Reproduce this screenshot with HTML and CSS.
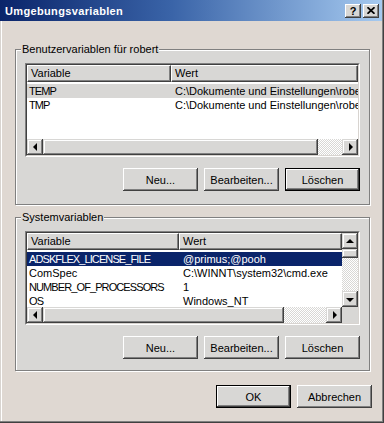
FILE: index.html
```html
<!DOCTYPE html>
<html lang="de">
<head>
<meta charset="utf-8">
<title>Umgebungsvariablen</title>
<link rel="stylesheet" href="styles.css">
</head>
<body>
<div class="window">
  <div class="titlebar">
    <span class="title">Umgebungsvariablen</span>
    <div class="tbtns">
      <span class="tbtn help">?</span>
      <span class="tbtn"><svg width="8" height="7" viewBox="0 0 8 7"><path d="M0.5 0.2L7.5 6.8M7.5 0.2L0.5 6.8" stroke="#000" stroke-width="1.7" fill="none"/></svg></span>
    </div>
  </div>
  <div class="content">
    <fieldset class="group g1">
      <legend>Benutzervariablen für robert</legend>
      <div class="listview lv1">
        <div class="lv-inner">
          <div class="lv-main">
            <div class="lv-header">
              <div class="hcell c1">Variable</div>
              <div class="hcell last">Wert</div>
            </div>
            <div class="lv-rows">
              <div class="row sel-inactive"><span class="c1 caps">TEMP</span><span class="c2">C:\Dokumente und Einstellungen\robe</span></div>
              <div class="row"><span class="c1 caps">TMP</span><span class="c2">C:\Dokumente und Einstellungen\robe</span></div>
            </div>
          </div>
          <div class="hscroll">
            <span class="arrow"><i class="tri-l"></i></span>
            <span class="thumb t1"></span>
            <span class="track"></span>
            <span class="arrow"><i class="tri-r"></i></span>
          </div>
        </div>
      </div>
      <div class="btnrow">
        <button class="btn">Neu...</button>
        <button class="btn">Bearbeiten...</button>
        <button class="btn default">Löschen</button>
      </div>
    </fieldset>

    <fieldset class="group g2">
      <legend>Systemvariablen</legend>
      <div class="listview lv2">
        <div class="lv-inner">
          <div class="lv-main">
            <div class="lv-header">
              <div class="hcell c1">Variable</div>
              <div class="hcell last">Wert</div>
            </div>
            <div class="lv-rows">
              <div class="row sel-active"><span class="c1 caps">ADSKFLEX_LICENSE_FILE</span><span class="c2">@primus;@pooh</span></div>
              <div class="row"><span class="c1">ComSpec</span><span class="c2">C:\WINNT\system32\cmd.exe</span></div>
              <div class="row"><span class="c1 caps">NUMBER_OF_PROCESSORS</span><span class="c2">1</span></div>
              <div class="row"><span class="c1 caps">OS</span><span class="c2">Windows_NT</span></div>
            </div>
          </div>
          <div class="vscroll">
            <span class="arrow"><i class="tri-u"></i></span>
            <span class="thumb t3"></span>
            <span class="track"></span>
            <span class="arrow"><i class="tri-d"></i></span>
          </div>
          <div class="hscroll">
            <span class="arrow"><i class="tri-l"></i></span>
            <span class="thumb t2"></span>
            <span class="track"></span>
            <span class="arrow"><i class="tri-r"></i></span>
          </div>
          <div class="corner"></div>
        </div>
      </div>
      <div class="btnrow">
        <button class="btn">Neu...</button>
        <button class="btn">Bearbeiten...</button>
        <button class="btn">Löschen</button>
      </div>
    </fieldset>

    <div class="footer">
      <button class="btn default">OK</button>
      <button class="btn">Abbrechen</button>
    </div>
  </div>
</div>
</body>
</html>
```
FILE: styles.css
```css
* { box-sizing: border-box; }
html, body { margin: 0; padding: 0; }
body {
  font-family: "Liberation Sans", Arial, sans-serif;
  font-size: 11px;
  color: #000;
  background: #dfd8d2;
}
.window {
  width: 384px;
  height: 423px;
  background: #dfd8d2;
  border-right: 1px solid #404040;
  border-bottom: 1px solid #404040;
  box-shadow: inset -1px -1px 0 #808080, inset 1px 0 0 #d8d4d0, inset 2px 0 0 #fff;
  display: flex;
  flex-direction: column;
}
.titlebar {
  height: 21px;
  margin-right: 1px;
  padding: 0 3px 0 5px;
  display: flex;
  align-items: center;
  justify-content: space-between;
  background: linear-gradient(to right, #0a246a 0%, #3a64a8 45%, #a6caf0 100%);
  color: #fff;
}
.title { font-weight: bold; letter-spacing: 0.35px; }
.tbtns { display: flex; gap: 2px; }
.tbtn {
  width: 16px;
  height: 14px;
  background: #d8d7d5;
  box-shadow: inset -1px -1px 0 #404040, inset 1px 1px 0 #fff, inset -2px -2px 0 #808080;
  display: flex;
  align-items: center;
  justify-content: center;
  color: #000;
}
.tbtn.help { font-weight: bold; font-size: 11px; line-height: 14px; }

.content {
  padding: 22px 11px 0 15px;
  display: flex;
  flex-direction: column;
}
.group {
  width: 355px;
  margin: 0;
  min-width: 0;
  padding: 7px 9px 13px 9px;
  border: 1px solid #808080;
  box-shadow: inset 1px 1px 0 #fff, 1px 1px 0 #fff;
  background: #d8d7d5;
}
.group legend {
  margin-left: -4px;
  padding: 0 1px;
  height: 13px;
  line-height: 13px;
  background: linear-gradient(#dfd8d2 50%, #d8d7d5 50%);
}
.g2 { margin-top: 6px; padding-bottom: 11px; }

.listview {
  height: 94px;
  border: 1px solid;
  border-color: #808080 #fff #fff #808080;
}
.lv-inner {
  height: 100%;
  border: 1px solid;
  border-color: #404040 #d8d4d0 #d8d4d0 #404040;
  background: #fff;
  display: grid;
  grid-template-columns: 1fr;
  grid-template-rows: 1fr 16px;
}
.lv2 .lv-inner { grid-template-columns: 1fr 16px; }
.lv-main { overflow: hidden; display: flex; flex-direction: column; min-width: 0; }
.lv-header { display: flex; height: 17px; flex: none; }
.hcell {
  background: #d8d7d5;
  border-top: 1px solid #fff;
  border-left: 1px solid #fff;
  border-right: 1px solid #404040;
  border-bottom: 1px solid #404040;
  box-shadow: inset -1px -1px 0 #808080;
  padding-left: 3px;
  line-height: 14px;
  white-space: nowrap;
  flex: none;
}
.hcell.last { flex: 1; }
.lv1 .c1 { width: 144px; flex: none; }
.lv2 .c1 { width: 152px; flex: none; }
.lv-rows { padding-top: 2px; }
.row {
  display: flex;
  height: 14px;
  line-height: 14px;
  white-space: nowrap;
  overflow: hidden;
}
.row .c1 { padding-left: 2px; overflow: hidden; }
.row .c2 { padding-left: 4px; }
.caps { letter-spacing: -0.9px; }
.sel-inactive { background: #d8d7d5; }
.sel-active { background: #0a246a; color: #fff; }

.hscroll { display: flex; grid-column: 1 / -1; grid-row: 2; }
.lv2 .hscroll { grid-column: 1; }
.vscroll { display: flex; flex-direction: column; grid-column: 2; grid-row: 1; }
.corner { grid-column: 2; grid-row: 2; background: #d8d7d5; }
.arrow, .thumb {
  background: #d8d7d5;
  box-shadow: inset -1px -1px 0 #404040, inset 1px 1px 0 #d8d7d5, inset -2px -2px 0 #808080, inset 2px 2px 0 #fff;
}
.arrow {
  width: 16px;
  height: 16px;
  flex: none;
  display: flex;
  align-items: center;
  justify-content: center;
}
.thumb { flex: none; }
.t1 { width: 275px; }
.t2 { width: 241px; }
.t3 { height: 9px; }
.track {
  flex: 1;
  background: repeating-conic-gradient(#fff 0 25%, #d8d7d5 0 50%) 0 0 / 2px 2px;
}
.tri-l, .tri-r, .tri-u, .tri-d { display: block; width: 0; height: 0; }
.tri-l { border-top: 4px solid transparent; border-bottom: 4px solid transparent; border-right: 4px solid #000; margin-left: -1px; }
.tri-r { border-top: 4px solid transparent; border-bottom: 4px solid transparent; border-left: 4px solid #000; margin-left: 1px; }
.tri-u { border-left: 4px solid transparent; border-right: 4px solid transparent; border-bottom: 4px solid #000; margin-top: -1px; }
.tri-d { border-left: 4px solid transparent; border-right: 4px solid transparent; border-top: 4px solid #000; margin-top: 1px; }

.btnrow {
  display: flex;
  justify-content: flex-end;
  gap: 6px;
  margin-top: 11px;
}
.btn {
  width: 75px;
  height: 23px;
  padding: 0;
  border: none;
  margin: 0;
  font: 11px "Liberation Sans", Arial, sans-serif;
  color: #000;
  background: #d8d7d5;
  box-shadow: inset -1px -1px 0 #404040, inset 1px 1px 0 #fff, inset -2px -2px 0 #808080;
}
.btn.default {
  box-shadow: inset 0 0 0 1px #000, inset -2px -2px 0 #404040, inset 2px 2px 0 #fff, inset -3px -3px 0 #808080;
}
.footer {
  display: flex;
  justify-content: flex-end;
  gap: 6px;
  margin-top: 14px;
}
```
